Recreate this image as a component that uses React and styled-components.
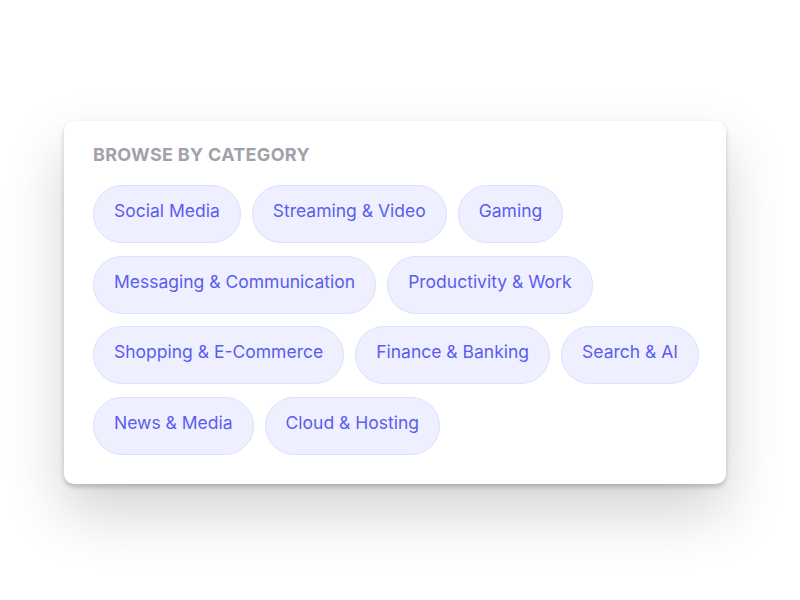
import React from "react";
import styled, { createGlobalStyle } from "styled-components";

const Global = createGlobalStyle`
  html, body { margin: 0; padding: 0; background: #ffffff; }
  body { font-family: Inter, "Noto Sans", sans-serif; }
`;

const Stage = styled.div`
  height: 575px;
  overflow: hidden;
  padding: 121px 0 0 64px;
  box-sizing: border-box;
`;

const Card = styled.section`
  width: 662px;
  box-sizing: border-box;
  background: #ffffff;
  border-radius: 10px;
  padding: 23px 24px 29px 29px;
  box-shadow: 0 3px 5px rgba(0, 0, 0, 0.2), 0 28px 60px rgba(0, 0, 0, 0.18);
`;

const Title = styled.h2`
  margin: 0 0 19px;
  font-family: Inter, sans-serif;
  font-size: 18px;
  font-weight: 700;
  line-height: 22px;
  letter-spacing: 0.3px;
  text-transform: uppercase;
  color: #a1a1aa;
`;

const Chips = styled.div`
  display: flex;
  flex-wrap: wrap;
  gap: 12.5px 11px;
`;

const Chip = styled.button`
  font-family: Inter, sans-serif;
  font-size: 17.5px;
  font-weight: 400;
  line-height: 22px;
  color: #5b5cf0;
  background: #eef0ff;
  border: 1px solid #d9e1fd;
  border-radius: 999px;
  padding: 14px 20px 20px;
  height: 58px;
  box-sizing: border-box;
  cursor: pointer;
`;

const categories = [
  "Social Media",
  "Streaming & Video",
  "Gaming",
  "Messaging & Communication",
  "Productivity & Work",
  "Shopping & E-Commerce",
  "Finance & Banking",
  "Search & AI",
  "News & Media",
  "Cloud & Hosting",
];

export default function App() {
  return (
    <>
      <Global />
      <Stage>
        <Card>
          <Title>Browse by Category</Title>
          <Chips>
            {categories.map((c) => (
              <Chip key={c}>{c}</Chip>
            ))}
          </Chips>
        </Card>
      </Stage>
    </>
  );
}
